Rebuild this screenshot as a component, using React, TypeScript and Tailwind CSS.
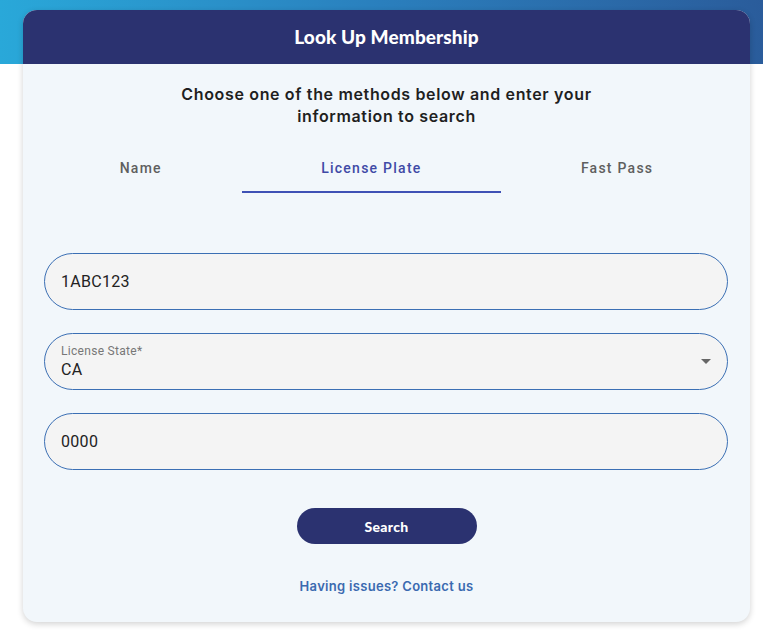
import { useState } from 'react';

const tabs = ['Name', 'License Plate', 'Fast Pass'];

function Field({ value, label, select }: { value: string; label?: string; select?: boolean }) {
    return (
        <div className="relative h-[57px] rounded-full border border-[#3b6fb4] bg-[#f4f4f4] px-4 flex flex-col justify-center">
            {label && (
                <span className="text-[12px] leading-[16px] text-[#777] tracking-[0.3px]">{label}</span>
            )}
            <span className={`text-[16px] tracking-[0.3px] text-[#222] ${label ? 'leading-[22px]' : 'leading-[20px]'}`}>
                {value}
            </span>
            {select && (
                <svg className="absolute right-[16px] top-[25px]" width="10" height="5" viewBox="0 0 10 5">
                    <path d="M0 0 L10 0 L5 5 Z" fill="#666" />
                </svg>
            )}
        </div>
    );
}

export default function App() {
    const [active, setActive] = useState(1);

    return (
        <div className="relative min-h-[643px] bg-white font-['Roboto',sans-serif]">
            <div className="absolute inset-x-0 top-0 h-[64px] bg-gradient-to-r from-[#29a8d9] via-[#2a7fbd] to-[#2a5c9b]" />
            <div className="relative pt-[10px] px-[23px] pr-[13px]">
                <div className="rounded-[14px] overflow-hidden bg-[#f2f7fb] shadow-[0_2px_6px_rgba(0,0,0,0.18)]">
                    <div className="h-[54px] bg-[#2b3270] flex items-center justify-center">
                        <h1 className="text-white text-[19px] font-black font-['Lato',sans-serif] tracking-[0.1px]">
                            Look Up Membership
                        </h1>
                    </div>
                    <div className="px-5 pb-[25px]">
                        <p className="mt-[19px] text-center text-[16px] leading-[22px] font-semibold text-[#1f1f1f] tracking-[0.65px] font-['Inter',sans-serif] max-w-[440px] mx-auto">
                            Choose one of the methods below and enter your information to search
                        </p>
                        <div className="mt-[18px] -mx-[3px] flex">
                            {tabs.map((t, i) => (
                                <button
                                    key={t}
                                    onClick={() => setActive(i)}
                                    className={`flex-auto h-[48px] px-4 text-[14px] font-medium tracking-[1.25px] border-b-2 ${
                                        active === i ? 'text-[#3f4aa6] border-[#3f51b5]' : 'text-[#5f5f5f] border-transparent'
                                    }`}
                                >
                                    {t}
                                </button>
                            ))}
                        </div>
                        <div className="mt-[60px] flex flex-col gap-[23px] pl-[1px] pr-[2px]">
                            <Field value="1ABC123" />
                            <Field value="CA" label="License State*" select />
                            <Field value="0000" />
                        </div>
                        <div className="mt-[38px] flex justify-center">
                            <button className="w-[180px] h-[36px] rounded-full bg-[#2b3270] text-white text-[14px] font-black font-['Lato',sans-serif] tracking-[0.3px]">
                                Search
                            </button>
                        </div>
                        <p className="mt-[33px] text-center text-[13px] font-semibold text-[#3b6ab0] font-['Inter',sans-serif] tracking-[0.3px]">
                            Having issues? Contact us
                        </p>
                    </div>
                </div>
            </div>
        </div>
    );
}
